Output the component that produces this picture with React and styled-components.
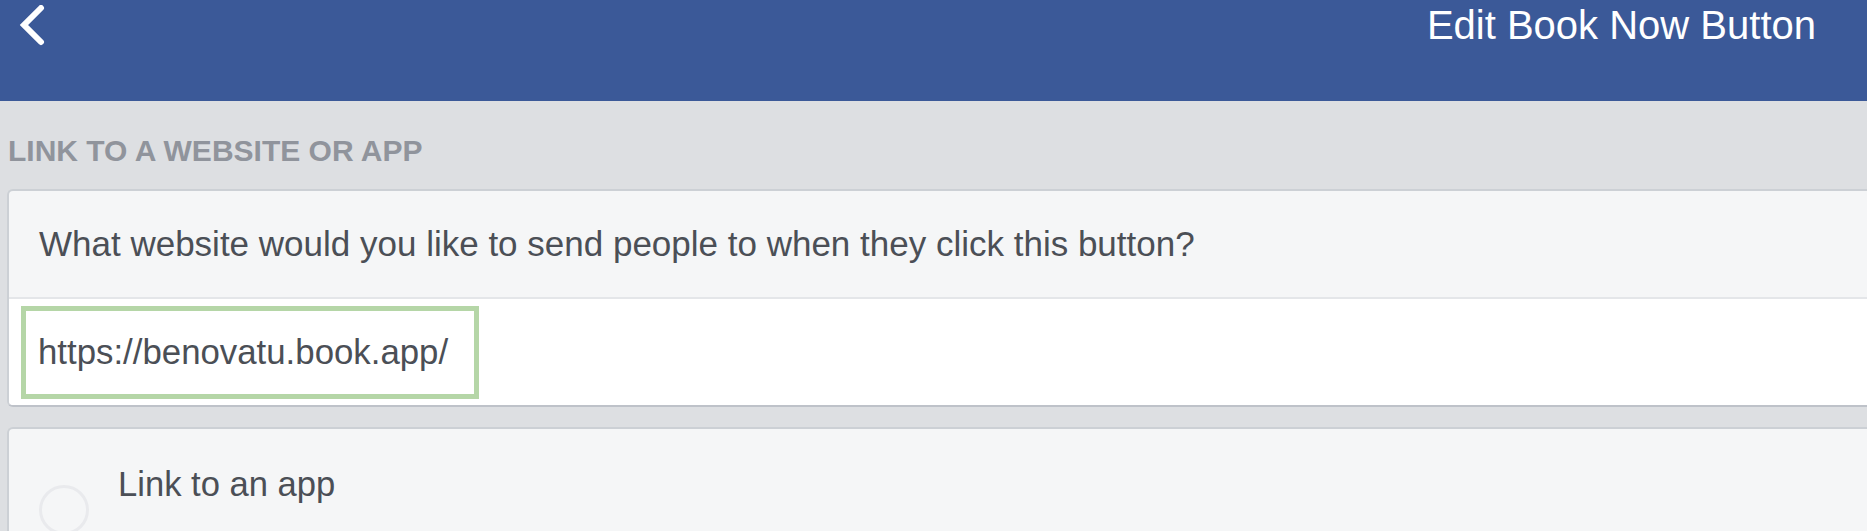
import React from 'react';
import styled, { createGlobalStyle } from 'styled-components';

const GlobalStyle = createGlobalStyle`
  html, body {
    margin: 0;
    padding: 0;
    background: #dddfe2;
    overflow: hidden;
    font-family: "Liberation Sans", Arial, sans-serif;
  }
  #root {
    min-height: 100vh;
  }
`;

const Header = styled.header`
  height: 101px;
  background: #3b5998;
  display: flex;
  align-items: flex-start;
  justify-content: space-between;
  padding: 0 51px 0 19px;
  box-sizing: border-box;

  svg {
    margin-top: 5px;
  }
`;

const Title = styled.h1`
  margin: 5px 0 0;
  font-size: 40px;
  line-height: 40px;
  font-weight: 400;
  color: #ffffff;
`;

const Main = styled.main`
  padding: 0 0 0 7px;
`;

const SectionLabel = styled.h2`
  margin: 35px 0 0 1px;
  font-size: 30px;
  line-height: 30px;
  font-weight: 700;
  color: #90949c;
`;

const Card = styled.div`
  margin-top: ${p => p.$gap}px;
  background: #f5f6f7;
  border: 2px solid #ccd0d5;
  border-right: none;
  border-bottom-color: ${p => p.$bottom || '#ccd0d5'};
  border-radius: 6px 0 0 6px;
  overflow: hidden;
`;

const Question = styled.div`
  height: 106px;
  display: flex;
  align-items: center;
  padding-left: 30px;
  font-size: 35px;
  color: #4b4f56;
  border-bottom: 2px solid #e4e6e9;
`;

const FieldRow = styled.div`
  background: #ffffff;
  height: 106px;
  display: flex;
  align-items: center;
  padding-left: 12px;
`;

const UrlField = styled.div`
  width: 458px;
  height: 93px;
  box-sizing: border-box;
  border: 5px solid #b5d6a7;
  display: flex;
  align-items: center;
  padding-left: 12px;
  font-size: 34.8px;
  color: #4b4f56;
`;

const OptionRow = styled.div`
  display: flex;
  align-items: flex-start;
  gap: 29px;
  padding: 38px 0 0 30px;
  height: 140px;
`;

const Radio = styled.span`
  width: 50px;
  height: 50px;
  box-sizing: border-box;
  border: 3px solid #e9eaed;
  border-radius: 50%;
  margin-top: 18px;
  flex-shrink: 0;
`;

const OptionText = styled.span`
  font-size: 34.6px;
  line-height: 34.6px;
  color: #4b4f56;
`;

const BackIcon = () => (
  <svg width="28" height="44" viewBox="0 0 28 44">
    <polyline
      points="22,3 5,20 22,37"
      fill="none"
      stroke="#ffffff"
      strokeWidth="6"
      strokeLinecap="round"
      strokeLinejoin="miter"
    />
  </svg>
);

export default function App() {
  return (
    <>
      <GlobalStyle />
      <Header>
        <BackIcon />
        <Title>Edit Book Now Button</Title>
      </Header>
      <Main>
        <SectionLabel>LINK TO A WEBSITE OR APP</SectionLabel>
        <Card $gap={23} $bottom="#bec2c9">
          <Question>What website would you like to send people to when they click this button?</Question>
          <FieldRow>
            <UrlField>https://benovatu.book.app/</UrlField>
          </FieldRow>
        </Card>
        <Card $gap={20}>
          <OptionRow>
            <Radio />
            <OptionText>Link to an app</OptionText>
          </OptionRow>
        </Card>
      </Main>
    </>
  );
}
